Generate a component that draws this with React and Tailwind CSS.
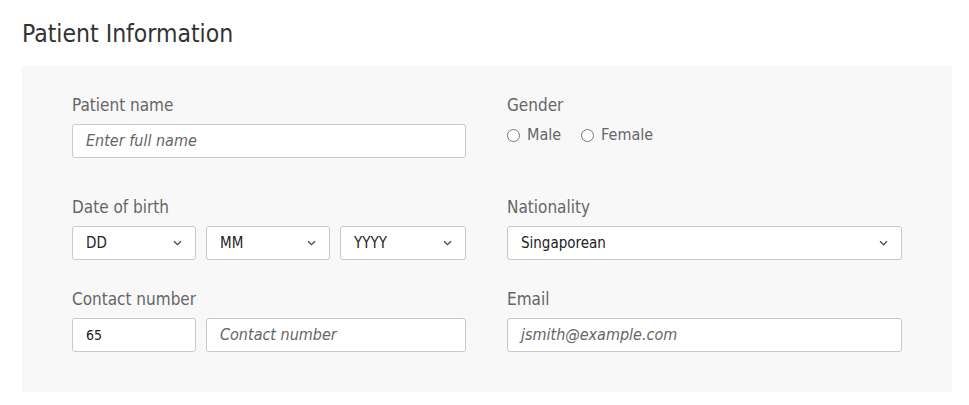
import React from 'react';

function Chevron() {
  return (
    <svg className="w-[9px] h-[6px] text-[#444]" viewBox="0 0 9 6" fill="none">
      <path d="M1 1.2 L4.5 4.6 L8 1.2" stroke="currentColor" strokeWidth="1.2" />
    </svg>
  );
}

function Select({ value, className }) {
  return (
    <div className={`h-[34px] bg-white border border-[#c8c8c8] rounded-[3px] flex items-center justify-between pl-[13px] pr-[13px] ${className}`}>
      <span className="text-[15px] text-[#222]">{value}</span>
      <Chevron />
    </div>
  );
}

function Input({ placeholder, value, className }) {
  return (
    <div className={`h-[34px] bg-white border border-[#c8c8c8] rounded-[3px] flex items-center pl-[13px] ${className}`}>
      {value ? (
        <span className="text-[14px] text-[#222]">{value}</span>
      ) : (
        <span className="text-[16px] italic text-[#666]">{placeholder}</span>
      )}
    </div>
  );
}

function Label({ children }) {
  return <div className="text-[17px] text-[#666] leading-[22px] mb-[8px]">{children}</div>;
}

function Radio({ label }) {
  return (
    <label className="flex items-center gap-[7px] text-[16px] text-[#666]">
      <span className="w-[13px] h-[13px] rounded-full border border-[#777] bg-white" />
      {label}
    </label>
  );
}

export default function App() {
  return (
    <div className="bg-white min-h-screen pl-[22px] pr-[17px] pt-[18px]" style={{ fontFamily: '"DejaVu Sans Condensed", "DejaVu Sans", sans-serif' }}>
      <h1 className="text-[24.5px] text-[#333] leading-[32px] mb-[16px]">Patient Information</h1>
      <div className="bg-[#f8f8f8] px-[50px] pt-[28px] pb-[40px]">
        <div className="grid grid-cols-[394px_395px] gap-x-[41px]">
          <div>
            <Label>Patient name</Label>
            <Input placeholder="Enter full name" />
          </div>
          <div>
            <Label>Gender</Label>
            <div className="flex items-center gap-[20px] mt-[-1px]">
              <Radio label="Male" />
              <Radio label="Female" />
            </div>
          </div>

          <div className="mt-[38px]">
            <Label>Date of birth</Label>
            <div className="flex gap-[10px]">
              <Select value="DD" className="w-[124px]" />
              <Select value="MM" className="w-[124px]" />
              <Select value="YYYY" className="flex-1" />
            </div>
          </div>
          <div className="mt-[38px]">
            <Label>Nationality</Label>
            <Select value="Singaporean" className="w-[395px]" />
          </div>

          <div className="mt-[28px]">
            <Label>Contact number</Label>
            <div className="flex gap-[10px]">
              <Input value="65" className="w-[124px]" />
              <Input placeholder="Contact number" className="flex-1" />
            </div>
          </div>
          <div className="mt-[28px]">
            <Label>Email</Label>
            <Input placeholder="jsmith@example.com" className="w-[395px]" />
          </div>
        </div>
      </div>
    </div>
  );
}
